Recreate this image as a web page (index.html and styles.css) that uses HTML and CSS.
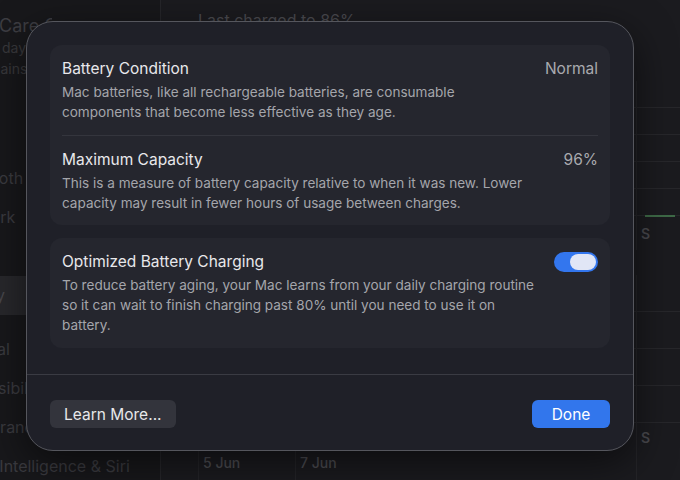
FILE: index.html
```html
<!DOCTYPE html>
<html>
<head>
	<meta charset="utf-8">
	<meta name="viewport" content="width=device-width, initial-scale=1">
	<title>Battery Health</title>
	<link rel="stylesheet" href="styles.css">
</head>
<body>
<div class="window">
	<div class="sidebar">
		<div class="account">
			<p class="acc-title">Care Coverage</p>
			<p class="acc-line">days remaining</p>
			<p class="acc-line shift">against loss</p>
		</div>
		<ul class="nav">
			<li>Wi-Fi</li>
			<li>Wi-Fi</li>
			<li>Bluetooth</li>
			<li>Network</li>
			<li>VPN</li>
			<li class="active">Battery</li>
			<li class="gap">General</li>
			<li>Accessibility</li>
			<li>Appearance</li>
			<li>Apple Intelligence &amp; Siri</li>
		</ul>
	</div>
	<div class="main">
		<p class="last">Last charged to 86%</p>
		<div class="chart level">
			<div class="col"></div>
			<div class="col"></div>
			<div class="col"><span class="bar"></span></div>
		</div>
		<div class="labels">
			<span></span><span></span><span>S</span>
		</div>
		<div class="chart usage">
			<div class="col"></div>
			<div class="col"></div>
			<div class="col"></div>
		</div>
		<div class="labels">
			<span></span><span></span><span>S</span>
		</div>
		<div class="labels dates">
			<span>5 Jun</span><span>7 Jun</span><span></span>
		</div>
	</div>
</div>

<div class="sheet">
	<div class="sheet-body">
		<div class="group">
			<div class="row">
				<div class="row-text">
					<h2>Battery Condition</h2>
					<p>Mac batteries, like all rechargeable batteries, are consumable<br>components that become less effective as they age.</p>
				</div>
				<span class="value">Normal</span>
			</div>
			<div class="row">
				<div class="row-text">
					<h2>Maximum Capacity</h2>
					<p>This is a measure of battery capacity relative to when it was new. Lower<br>capacity may result in fewer hours of usage between charges.</p>
				</div>
				<span class="value">96%</span>
			</div>
		</div>
		<div class="group">
			<div class="row">
				<div class="row-text">
					<h2>Optimized Battery Charging</h2>
					<p>To reduce battery aging, your Mac learns from your daily charging routine<br>so it can wait to finish charging past 80% until you need to use it on<br>battery.</p>
				</div>
				<span class="toggle on"><span class="knob"></span></span>
			</div>
		</div>
	</div>
	<div class="sheet-foot">
		<button class="btn">Learn More...</button>
		<button class="btn primary">Done</button>
	</div>
</div>
</body>
</html>
```

FILE: styles.css
```css
* {
	box-sizing: border-box;
}
body {
	margin: 0;
	width: 680px;
	height: 480px;
	overflow: hidden;
	background: #19191d;
	font-family: Inter, "Noto Sans", sans-serif;
	-webkit-font-smoothing: antialiased;
}
p, h2, ul {
	margin: 0;
	padding: 0;
}

/* dimmed window behind the sheet */
.window {
	display: flex;
	height: 480px;
}
.sidebar {
	width: 161px;
	flex: none;
	overflow: hidden;
	background: #18181b;
	border-right: 1px solid #26262a;
}
.account {
	width: 52px;
	overflow: hidden;
	padding-top: 15px;
	color: #3d3d42;
	white-space: nowrap;
}
.acc-title {
	font-size: 18px;
	line-height: 22px;
	margin-left: -1px;
}
.acc-line {
	font-size: 14px;
	line-height: 21px;
	color: #38383c;
	margin-left: 2px;
}
.acc-line.shift {
	margin-left: -16px;
}
.nav {
	list-style: none;
	margin-top: 2px;
	margin-left: -49px;
}
.nav li {
	height: 39px;
	line-height: 39px;
	font-size: 16px;
	color: #3b3b40;
	white-space: nowrap;
}
.nav li.active {
	background: #28282c;
	color: #47474c;
	margin-left: 49px;
	text-indent: -49px;
}
.nav li.gap {
	margin-top: 15px;
}

.main {
	flex: 1;
	background: #1b1b1f;
	padding-left: 37px;
	overflow: hidden;
}
.last {
	margin-top: 10px;
	font-size: 16px;
	line-height: 20px;
	color: #4a4a4f;
}
.chart {
	display: grid;
	grid-template-columns: 97px 341px 1fr;
	background: repeating-linear-gradient(to bottom, transparent 0 26px, #27272b 26px 27px);
}
.chart .col {
	border-left: 1px solid #242428;
	display: flex;
	flex-direction: column;
}
.level {
	margin-top: 51px;
	height: 136px;
}
.usage {
	margin-top: 25px;
	height: 148px;
	background: repeating-linear-gradient(to bottom, transparent 0 36px, #27272b 36px 37px);
}
.bar {
	margin: auto 5px 0 8px;
	height: 2px;
	background: #3e6a47;
}
.labels {
	display: grid;
	grid-template-columns: 97px 341px 1fr;
	height: 33px;
	font-size: 14px;
	font-weight: 600;
	color: #48484d;
	line-height: 33px;
}
.labels span {
	padding-left: 4px;
	border-left: 1px solid #242428;
}
.labels + .chart {
	margin-top: 25px;
}
.usage + .labels {
	height: 29px;
	line-height: 29px;
}
.dates {
	height: 28px;
	line-height: 22px;
	font-weight: 500;
	color: #4c4c51;
}

/* sheet */
.sheet {
	position: absolute;
	left: 26px;
	top: 21px;
	width: 608px;
	height: 430px;
	display: flex;
	flex-direction: column;
	background: #1f2028;
	border: 1px solid #55565d;
	border-radius: 27px;
	box-shadow: 0 12px 40px rgba(0, 0, 0, 0.55);
	color: #e6e6e9;
}
.sheet-body {
	padding: 23px 23px 26px;
	display: flex;
	flex-direction: column;
	gap: 13px;
}
.group {
	background: #25262e;
	border-radius: 12px;
}
.row {
	display: flex;
	justify-content: space-between;
	align-items: flex-start;
	padding: 13px 12px;
}
.group .row + .row {
	border-top: 1px solid #34353d;
	margin: 0 12px;
	padding: 14px 0 12px;
}
.group .row:first-child {
	padding-top: 14px;
}
.row h2 {
	font-size: 15.5px;
	font-weight: 400;
	line-height: 20px;
	color: #e8e8eb;
}
.row p {
	margin-top: 3px;
	font-size: 13.55px;
	line-height: 20px;
	color: #a4a5ab;
	white-space: nowrap;
}
.value {
	font-size: 15.5px;
	line-height: 20px;
	color: #a9aaaf;
}
.toggle {
	width: 44px;
	height: 20px;
	border-radius: 10px;
	background: #3376ee;
	padding: 2px;
	display: flex;
	justify-content: flex-end;
}
.knob {
	width: 26px;
	height: 16px;
	border-radius: 8px;
	background: #e1e6f6;
}
.sheet-foot {
	margin-top: auto;
	border-top: 1px solid #3a3b43;
	padding: 25px 23px 23px;
	display: flex;
	justify-content: space-between;
}
.btn {
	height: 28px;
	border: 0;
	border-radius: 6px;
	padding: 0 14px;
	background: #33343c;
	color: #e8e8ea;
	font-family: Inter, "Noto Sans", sans-serif;
	font-size: 15.5px;
}
.btn.primary {
	width: 78px;
	background: #3276ec;
	color: #fff;
}
```
